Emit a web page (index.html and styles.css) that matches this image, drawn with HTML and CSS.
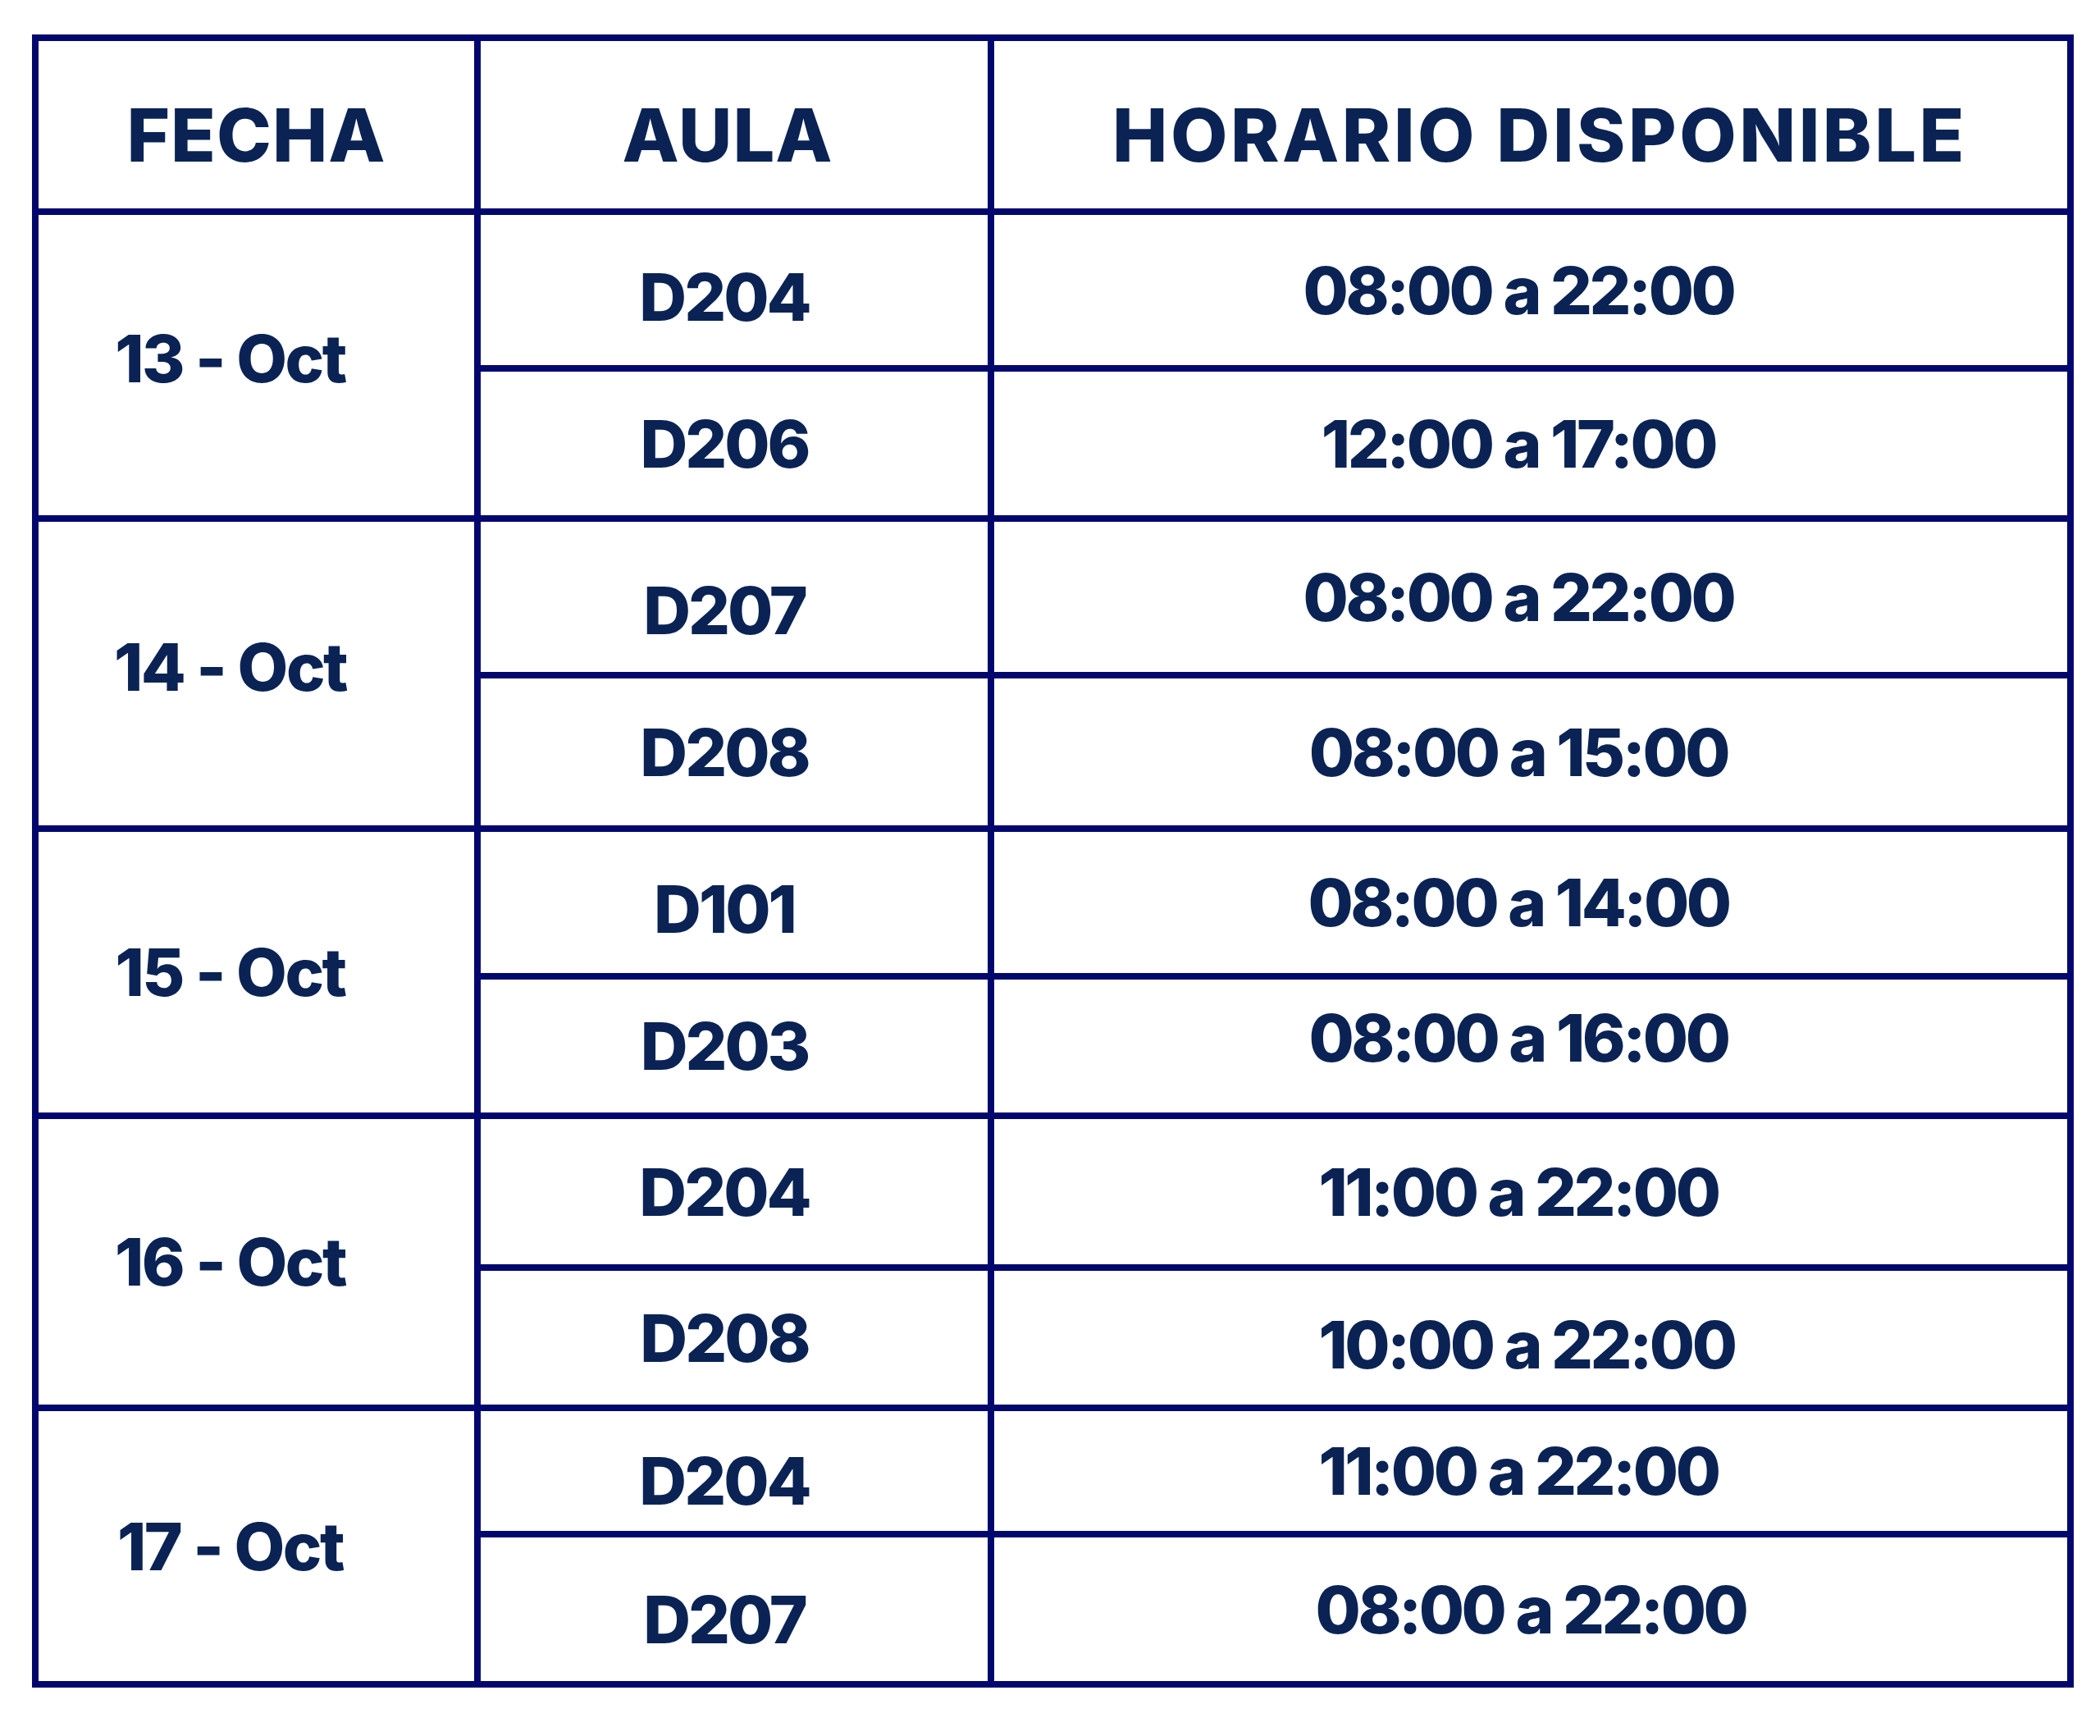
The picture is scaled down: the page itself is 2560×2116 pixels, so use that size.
FILE: index.html
```html
<!DOCTYPE html>
<html lang="es">
<head>
<meta charset="utf-8">
<title>Horario disponible</title>
<link rel="stylesheet" href="styles.css">
</head>
<body>
<div class="schedule">
  <div class="cell head">FECHA</div>
  <div class="cell head head-aula">AULA</div>
  <div class="cell head head-wide">HORARIO DISPONIBLE</div>

  <div class="cell date raise-1">13 - Oct</div>
  <div class="cell room lower-1">D204</div>
  <div class="cell time">08:00 a 22:00</div>
  <div class="cell room">D206</div>
  <div class="cell time">12:00 a 17:00</div>

  <div class="cell date raise-1">14 - Oct</div>
  <div class="cell room lower-3">D207</div>
  <div class="cell time">08:00 a 22:00</div>
  <div class="cell room">D208</div>
  <div class="cell time">08:00 a 15:00</div>

  <div class="cell date">15 - Oct</div>
  <div class="cell room lower-1">D101</div>
  <div class="cell time">08:00 a 14:00</div>
  <div class="cell room">D203</div>
  <div class="cell time raise-2">08:00 a 16:00</div>

  <div class="cell date">16 - Oct</div>
  <div class="cell room">D204</div>
  <div class="cell time">11:00 a 22:00</div>
  <div class="cell room">D208</div>
  <div class="cell time lower-1 shift-right-1">10:00 a 22:00</div>

  <div class="cell date">17 - Oct</div>
  <div class="cell room lower-2">D204</div>
  <div class="cell time">11:00 a 22:00</div>
  <div class="cell room lower-2">D207</div>
  <div class="cell time shift-right-2">08:00 a 22:00</div>
</div>
</body>
</html>
```
FILE: styles.css
```css
html, body {
  margin: 0;
  padding: 0;
  background: #ffffff;
}

body {
  font-family: Inter, "Noto Sans", "Liberation Sans", sans-serif;
  color: #0a2354;
}

.schedule {
  display: grid;
  grid-template-columns: 531px 618px 1308px;
  grid-template-rows: 204px 183px 175px 183px 179px 172px 162px 177px 163px 146px 175px;
  gap: 8px;
  padding: 8px;
  background: #02076e;
  width: fit-content;
  margin: 42px 0 0 39px;
}

.cell {
  background: #ffffff;
  display: flex;
  align-items: center;
  justify-content: center;
  white-space: nowrap;
  font-weight: 800;
  line-height: 1;
}

.head {
  font-size: 90px;
  padding-top: 26px;
  letter-spacing: 1px;
}

.head-aula {
  padding-right: 16px;
}

.head-wide {
  letter-spacing: 3.5px;
  padding-left: 22px;
}

.date {
  grid-row: span 2;
  font-size: 80px;
  padding-right: 64px;
  letter-spacing: -2.5px;
}

.room {
  font-size: 80px;
  padding-right: 24px;
  letter-spacing: -3px;
}

.time {
  font-size: 80px;
  padding-right: 30px;
  letter-spacing: -3.5px;
}

.lower-1 {
  padding-top: 16px;
}

.lower-2 {
  padding-top: 24px;
}

.lower-3 {
  padding-top: 32px;
}

.raise-1 {
  padding-bottom: 16px;
}

.raise-2 {
  padding-bottom: 20px;
}

.shift-right-1 {
  padding-right: 10px;
}

.shift-right-2 {
  padding-right: 0;
}
```
